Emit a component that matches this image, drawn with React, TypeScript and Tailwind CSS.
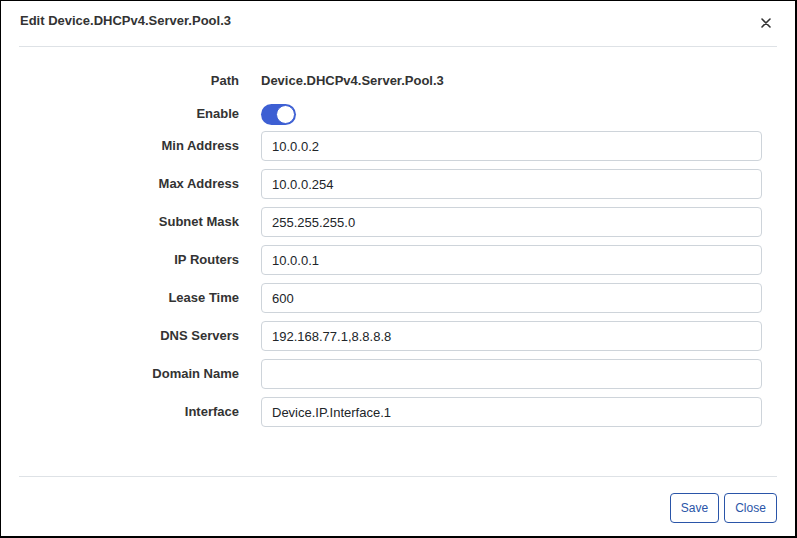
import { useState } from 'react'

const FIELDS: { label: string; value: string }[] = [
  { label: 'Min Address', value: '10.0.0.2' },
  { label: 'Max Address', value: '10.0.0.254' },
  { label: 'Subnet Mask', value: '255.255.255.0' },
  { label: 'IP Routers', value: '10.0.0.1' },
  { label: 'Lease Time', value: '600' },
  { label: 'DNS Servers', value: '192.168.77.1,8.8.8.8' },
  { label: 'Domain Name', value: '' },
  { label: 'Interface', value: 'Device.IP.Interface.1' },
]

function Row({ label, children, className = '' }: { label: string; children: React.ReactNode; className?: string }) {
  return (
    <div className={`flex items-center ${className}`}>
      <div className="w-[220px] shrink-0 text-right font-bold text-[#333]">{label}</div>
      <div className="ml-[22px] w-[501px]">{children}</div>
    </div>
  )
}

export default function App() {
  const [enabled, setEnabled] = useState(true)
  const [values, setValues] = useState(FIELDS.map((f) => f.value))

  return (
    <div
      className="w-[797px] h-[538px] bg-white border-t border-l border-r-2 border-b-2 border-black flex flex-col text-[13px] text-[#212529]"
      style={{ fontFamily: '"Liberation Sans", Arial, sans-serif' }}
    >
      {/* header */}
      <div className="mx-[18px] h-[46px] shrink-0 border-b border-[#dee2e6] flex items-start justify-between pt-[12px]">
        <h1 className="pl-px font-bold text-[13px] text-[#333] leading-[16px]">Edit Device.DHCPv4.Server.Pool.3</h1>
        <button className="mr-[6px] mt-[5px] w-[10px] h-[10px] flex items-center justify-center" aria-label="close">
          <svg width="10" height="10" viewBox="0 0 10 10">
            <path d="M1 1 L9 9 M9 1 L1 9" stroke="#333" strokeWidth="1.6" strokeLinecap="round" />
          </svg>
        </button>
      </div>

      {/* body */}
      <div className="mx-[18px] flex-1 pt-[24px] border-b border-[#dee2e6]">
        <Row label="Path" className="h-[20px]">
          <span className="font-bold text-[#333]">Device.DHCPv4.Server.Pool.3</span>
        </Row>
        <Row label="Enable" className="h-[20px] mt-[13px]">
          <button
            onClick={() => setEnabled(!enabled)}
            className={`relative w-[35px] h-[21px] rounded-full flex items-center ${enabled ? 'bg-[#3d5fd3]' : 'bg-[#ccc]'}`}
          >
            <span
              className={`absolute top-[1px] w-[19px] h-[19px] rounded-full bg-white border border-[#3d5fd3] ${enabled ? 'right-px' : 'left-px'}`}
            />
          </button>
        </Row>
        <div className="mt-[7px] flex flex-col gap-[8px]">
          {FIELDS.map((f, i) => (
            <Row key={f.label} label={f.label}>
              <input
                value={values[i]}
                onChange={(e) => setValues(values.map((v, j) => (j === i ? e.target.value : v)))}
                className="w-full h-[30px] rounded-[4px] border border-[#ced4da] px-[10px] text-[13px] text-[#212529] outline-none"
              />
            </Row>
          ))}
        </div>
      </div>

      {/* footer */}
      <div className="mx-[18px] h-[59px] shrink-0 flex items-start justify-end gap-[5px] pt-[16px]">
        <button className="h-[30px] w-[49px] rounded-[4px] border border-[#2a55a8] text-[#2a55a8] text-[12px]">Save</button>
        <button className="h-[30px] w-[53px] rounded-[4px] border border-[#2a55a8] text-[#2a55a8] text-[12px]">Close</button>
      </div>
    </div>
  )
}
